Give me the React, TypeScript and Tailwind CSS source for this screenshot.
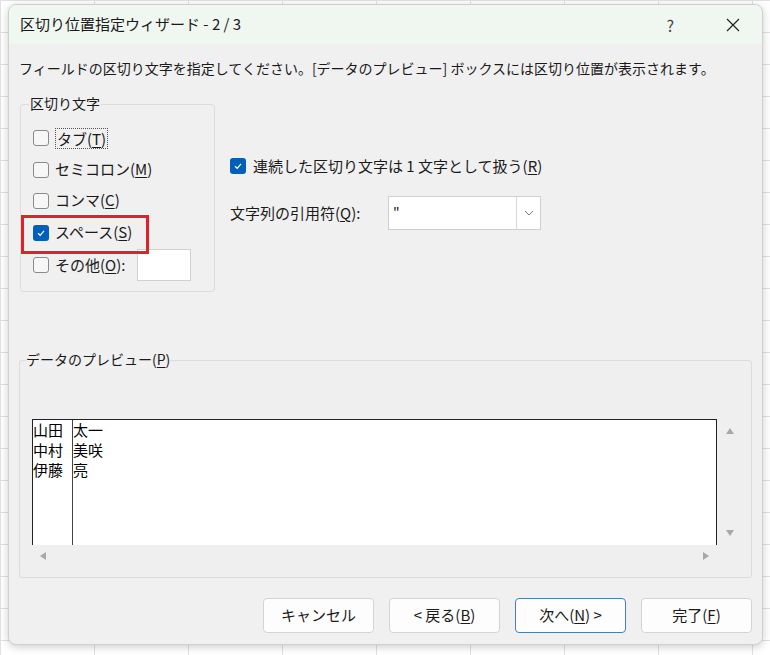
import React from "react";

const F = { fontFamily: '"Noto Sans CJK JP", "Noto Sans", sans-serif' };

function Box({ checked }: { checked?: boolean }) {
  return checked ? (
    <span className="w-[16px] h-[16px] rounded-[3px] bg-[#005fb8] flex items-center justify-center shrink-0">
      <svg width="10" height="10" viewBox="0 0 10 10"><path d="M2 5.2 L4.2 7.3 L8 2.8" stroke="white" strokeWidth="1.2" fill="none" /></svg>
    </span>
  ) : (
    <span className="w-[16px] h-[16px] rounded-[3px] border border-[#8a8a8a] bg-[#f7f7f7] shrink-0" />
  );
}

function U({ c }: { c: string }) {
  return <span className="underline underline-offset-2">{c}</span>;
}

function Btn({ children, primary }: { children: React.ReactNode; primary?: boolean }) {
  return (
    <div className={`w-[111px] h-[35px] rounded-[4px] bg-[#fdfdfd] flex items-center justify-center text-[15px] text-[#1a1a1a] border ${primary ? "border-[#4a7fb5]" : "border-[#d4d4d4]"}`}>
      <span>{children}</span>
    </div>
  );
}

export default function App() {
  const gridBg = {
    backgroundImage:
      "linear-gradient(#e1e1e1 1px, transparent 1px), linear-gradient(90deg, #e1e1e1 1px, transparent 1px)",
    backgroundSize: "94px 32px",
  };
  return (
    <div className="w-[770px] h-[655px] bg-white relative overflow-hidden" style={{ ...F, ...gridBg }}>
      <div className="absolute left-[8px] top-[4px] w-[755px] h-[641px] rounded-[8px] bg-[#f0f0f0] border border-[#cfcfcf] shadow-[0_2px_8px_rgba(0,0,0,0.2)] overflow-hidden flex flex-col text-[#1a1a1a]">
        <div className="h-[39px] bg-[#eff7f0] flex items-center pl-[11px] pr-[22px] shrink-0">
          <span className="text-[15px] flex-1">区切り位置指定ウィザード - 2 / 3</span>
          <span className="text-[16px] text-[#444] mr-[52px]">?</span>
          <svg width="14" height="14" viewBox="0 0 14 14"><path d="M1 1 L13 13 M13 1 L1 13" stroke="#222" strokeWidth="1.2" /></svg>
        </div>
        <div className="pl-[10px] mt-[14px] text-[14px] leading-[20px]">
          フィールドの区切り文字を指定してください。[データのプレビュー] ボックスには区切り位置が表示されます。
        </div>
        <div className="flex mt-[18px] pl-[11px]">
          <div className="relative w-[195px] h-[188px] border border-[#dcdcdc] rounded-[3px] mt-[8px]">
            <span className="absolute -top-[12px] left-[8px] bg-[#f0f0f0] text-[14px] px-[1px] leading-[20px]">区切り文字</span>
            <div className="flex flex-col pl-[12px] pt-[17px] text-[15px]">
              <div className="h-[32px] flex items-center gap-[6px]"><Box /><span className="border border-dotted border-[#555] px-[1px] leading-[19px]">タブ(<U c="T" />)</span></div>
              <div className="h-[31px] flex items-center gap-[6px]"><Box /><span>セミコロン(<U c="M" />)</span></div>
              <div className="h-[31px] flex items-center gap-[6px]"><Box /><span>コンマ(<U c="C" />)</span></div>
              <div className="relative h-[33px] flex items-center gap-[6px]">
                <span className="absolute -left-[12px] top-[-1px] w-[128px] h-[39px] border-[3px] border-[#e0202a]" />
                <Box checked /><span>スペース(<U c="S" />)</span>
              </div>
              <div className="h-[32px] flex items-center gap-[6px]">
                <Box /><span>その他(<U c="O" />):</span>
                <span className="ml-[6px] w-[54px] h-[32px] bg-white border border-[#d0d0d0]" />
              </div>
            </div>
          </div>
          <div className="pl-[15px] pt-[59px]">
            <div className="flex items-center gap-[7px] text-[15px] h-[22px]"><Box checked /><span>連続した区切り文字は 1 文字として扱う(<U c="R" />)</span></div>
            <div className="flex items-center mt-[19px] text-[15px]">
              <span className="w-[158px]">文字列の引用符(<U c="Q" />):</span>
              <div className="w-[153px] h-[34px] bg-white border border-[#cfcfcf] flex">
                <span className="flex-1 pl-[4px] text-[14px] leading-[30px]">"</span>
                <span className="w-[24px] border-l border-[#d8d8d8] flex items-center justify-center">
                  <svg width="10" height="6" viewBox="0 0 10 6"><path d="M1 1 L5 5 L9 1" stroke="#777" fill="none" /></svg>
                </span>
              </div>
            </div>
          </div>
        </div>
        <div className="relative mx-[10px] mt-[68px] h-[218px] border border-[#dcdcdc] rounded-[3px] bg-[#efefef]">
          <span className="absolute -top-[12px] left-[6px] bg-[#f0f0f0] text-[14px] leading-[20px]">データのプレビュー(<U c="P" />)</span>
          <div className="flex mt-[58px] ml-[12px]">
            <div className="w-[685px] h-[126px] bg-white border-t border-l border-r border-[#222] flex text-[15px] leading-[20px] text-black">
              <div className="w-[40px] border-r border-[#444]">
                <div>山田</div><div>中村</div><div>伊藤</div>
              </div>
              <div>
                <div>太一</div><div>美咲</div><div>亮</div>
              </div>
            </div>
            <div className="w-[25px] flex flex-col items-center justify-between py-[8px]">
              <svg width="10" height="8" viewBox="0 0 10 8"><path d="M5 1 L9 7 L1 7Z" fill="#a8a8a8" /></svg>
              <svg width="10" height="8" viewBox="0 0 10 8"><path d="M5 7 L9 1 L1 1Z" fill="#a8a8a8" /></svg>
            </div>
          </div>
          <div className="w-[685px] ml-[12px] h-[22px] flex items-center justify-between px-[7px]">
            <svg width="8" height="10" viewBox="0 0 8 10"><path d="M1 5 L7 1 L7 9Z" fill="#a8a8a8" /></svg>
            <svg width="8" height="10" viewBox="0 0 8 10"><path d="M7 5 L1 1 L1 9Z" fill="#a8a8a8" /></svg>
          </div>
        </div>
        <div className="flex justify-end gap-[15px] pr-[10px] mt-[20px]">
          <Btn>キャンセル</Btn>
          <Btn>&lt; 戻る(<U c="B" />)</Btn>
          <Btn primary>次へ(<U c="N" />) &gt;</Btn>
          <Btn>完了(<U c="F" />)</Btn>
        </div>
      </div>
    </div>
  );
}
